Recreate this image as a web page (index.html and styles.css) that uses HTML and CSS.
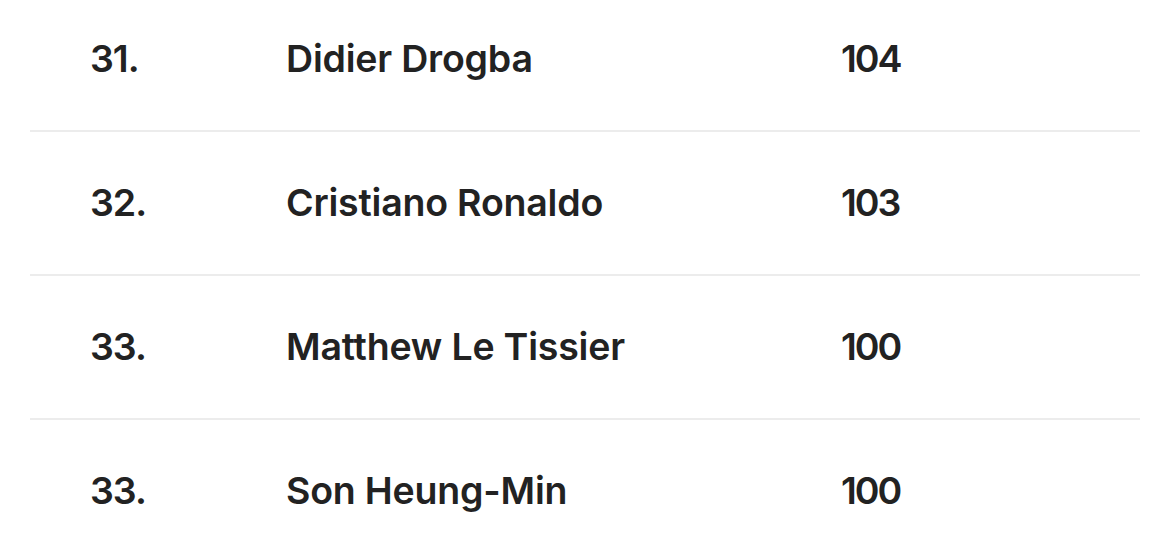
FILE: index.html
```html
<!DOCTYPE html>
<html>
<head>
<meta charset="utf-8">
<link rel="stylesheet" href="styles.css">
</head>
<body>
<div class="table">
  <div class="row"><span class="rank">31.</span><span class="name">Didier Drogba</span><span class="goals">104</span></div>
  <div class="row"><span class="rank">32.</span><span class="name">Cristiano Ronaldo</span><span class="goals">103</span></div>
  <div class="row"><span class="rank">33.</span><span class="name">Matthew Le Tissier</span><span class="goals">100</span></div>
  <div class="row"><span class="rank">33.</span><span class="name">Son Heung-Min</span><span class="goals">100</span></div>
</div>
</body>
</html>
```
FILE: styles.css
```css
html, body {
  margin: 0;
  padding: 0;
  background: #ffffff;
}
body {
  font-family: "Inter", "Lato", sans-serif;
  font-weight: 600;
  font-size: 37.5px;
  color: #222222;
  overflow: hidden;
}
.table {
  margin: -12px 30px 0 30px;
}
.row {
  display: grid;
  grid-template-columns: 196px 555px 1fr;
  align-items: center;
  height: 142px;
  padding-left: 60px;
  border-bottom: 2px solid #ececec;
}
.row > span {
  white-space: nowrap;
  margin-top: -2px;
}
.rank {
  letter-spacing: -1px;
}
.name {
  letter-spacing: -0.2px;
}
.goals {
  letter-spacing: -2px;
}
```
